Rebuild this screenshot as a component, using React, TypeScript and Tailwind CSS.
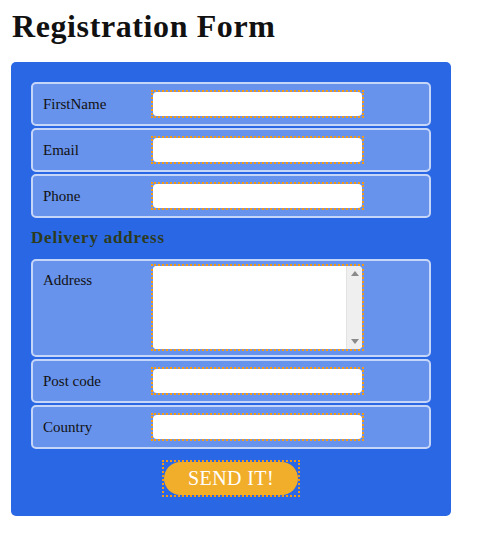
import React from "react";

const serif = { fontFamily: '"Liberation Serif", "DejaVu Serif", serif' };

function FakeScrollbar() {
  return (
    <div className="flex w-[16px] flex-col items-center justify-between rounded-r-[4px] border-l border-[#e2e2e2] bg-[#efefef] py-[5px]">
      <svg width="8" height="5" viewBox="0 0 8 5">
        <path d="M4 0 L8 5 L0 5 Z" fill="#8a8a8a" />
      </svg>
      <svg width="8" height="5" viewBox="0 0 8 5">
        <path d="M0 0 L8 0 L4 5 Z" fill="#8a8a8a" />
      </svg>
    </div>
  );
}

function Field({ label, tall }: { label: string; tall?: boolean }) {
  return (
    <div
      className={`flex ${tall ? "items-start h-[98px]" : "items-center h-[44px]"} rounded-[5px] border-2 border-[#c6d6f8] bg-[#6893ec] pl-[10px]`}
    >
      <label className={`w-[108px] shrink-0 text-[15px] leading-[22px] text-[#111] ${tall ? "pt-[8px]" : ""}`}>
        {label}
      </label>
      <div className={`border-2 border-dotted border-[#f59a12] ${tall ? "mt-[3px]" : ""}`}>
        {tall ? (
          <div className="flex h-[83px] w-[209px] rounded-[4px] bg-white">
            <textarea className="block h-full flex-1 resize-none rounded-l-[4px] bg-white outline-none" />
            <FakeScrollbar />
          </div>
        ) : (
          <input className="block w-[209px] h-[24px] rounded-[4px] bg-white outline-none" />
        )}
      </div>
    </div>
  );
}

export default function App() {
  return (
    <div className="pl-[11px] bg-white min-h-[543px]" style={serif}>
      <h1 className="pt-[7px] pl-[1px] text-[32px] leading-[38px] font-bold tracking-[0.6px] text-[#111] mb-[17px]">
        Registration Form
      </h1>
      <form className="w-[440px] rounded-[5px] bg-[#2967e4] p-[20px] pb-[19px]">
        <div className="flex flex-col gap-[2px]">
          <Field label="FirstName" />
          <Field label="Email" />
          <Field label="Phone" />
        </div>
        <h2 className="text-[17px] font-bold tracking-[0.8px] text-[#2d3b1c] pt-[10px] pb-[11px] leading-[20px]">
          Delivery address
        </h2>
        <div className="flex flex-col gap-[2px]">
          <Field label="Address" tall />
          <Field label="Post code" />
          <Field label="Country" />
        </div>
        <div className="flex justify-center pt-[11px]">
          <div className="border-2 border-dotted border-[#f59a12]">
            <button
              type="button"
              className="block w-[134px] h-[33px] rounded-full bg-[#f1ae2b] text-white text-[20px] tracking-[0.4px] leading-[33px]"
              style={serif}
            >
              SEND IT!
            </button>
          </div>
        </div>
      </form>
    </div>
  );
}
